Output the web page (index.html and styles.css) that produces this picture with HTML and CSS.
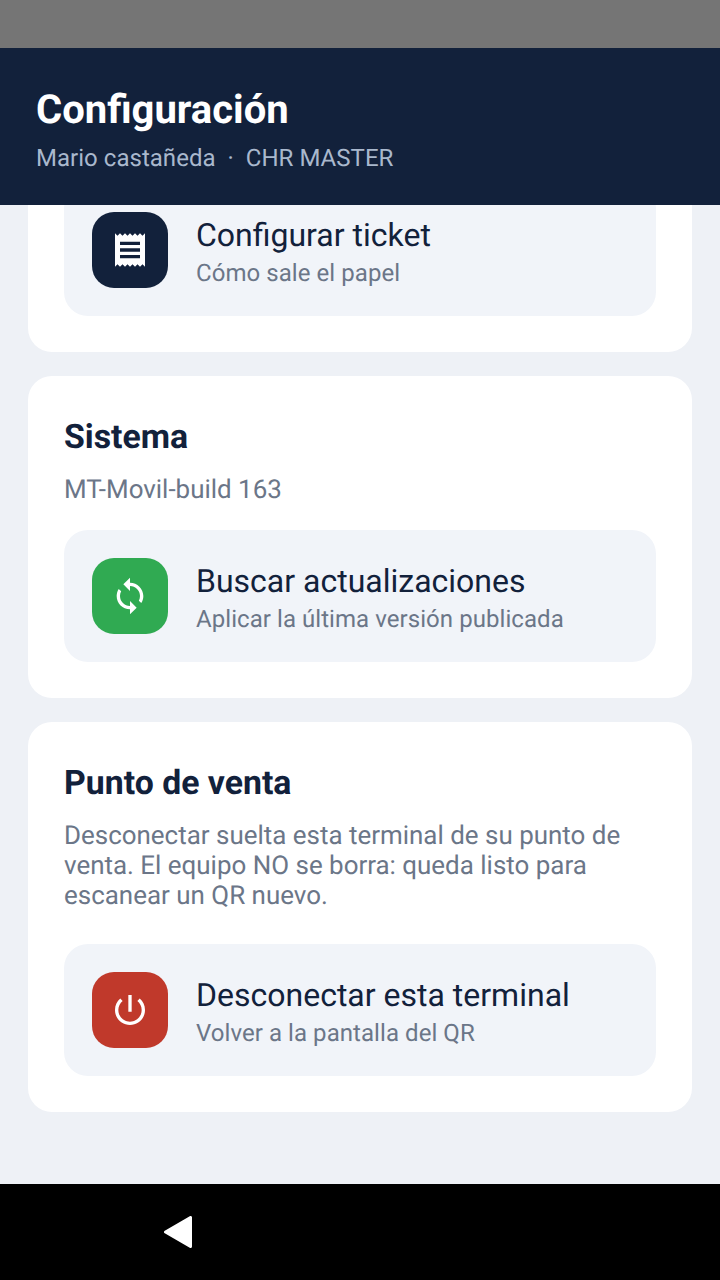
FILE: index.html
```html
<!DOCTYPE html>
<html lang="es">

<head>
  <meta charset="UTF-8" />
  <meta name="viewport" content="width=device-width, initial-scale=1.0" />
  <title>Configuración</title>

  <link rel="stylesheet" href="styles.css">
</head>

<body>
  <div class="status-bar"></div>

  <header class="header">
    <h1>Configuración</h1>
    <p>Mario castañeda &nbsp;·&nbsp; CHR MASTER</p>
  </header>

  <main class="scroll">
    <section class="card">
      <div class="row">
        <div class="icon icon-navy">
          <svg viewBox="0 0 24 24">
            <path d="M18 17H6v-2h12v2zm0-4H6v-2h12v2zm0-4H6V7h12v2zM3 22l1.5-1.5L6 22l1.5-1.5L9 22l1.5-1.5L12 22l1.5-1.5L15 22l1.5-1.5L18 22l1.5-1.5L21 22V2l-1.5 1.5L18 2l-1.5 1.5L15 2l-1.5 1.5L12 2l-1.5 1.5L9 2 7.5 3.5 6 2 4.5 3.5 3 2v20z" />
          </svg>
        </div>
        <div class="row-text">
          <div class="row-title">Configurar ticket</div>
          <div class="row-sub">Cómo sale el papel</div>
        </div>
      </div>
    </section>

    <section class="card">
      <h2>Sistema</h2>
      <p class="desc">MT-Movil-build 163</p>
      <div class="row">
        <div class="icon icon-green">
          <svg viewBox="0 0 24 24">
            <path d="M12 4V1L8 5l4 4V6c3.31 0 6 2.69 6 6 0 1.01-.25 1.97-.7 2.8l1.46 1.46C19.54 15.03 20 13.57 20 12c0-4.42-3.58-8-8-8zm0 14c-3.31 0-6-2.69-6-6 0-1.01.25-1.97.7-2.8L5.24 7.74C4.46 8.97 4 10.43 4 12c0 4.42 3.58 8 8 8v3l4-4-4-4v3z" />
          </svg>
        </div>
        <div class="row-text">
          <div class="row-title">Buscar actualizaciones</div>
          <div class="row-sub">Aplicar la última versión publicada</div>
        </div>
      </div>
    </section>

    <section class="card">
      <h2>Punto de venta</h2>
      <p class="desc desc-long">Desconectar suelta esta terminal de su punto de venta. El equipo NO se borra: queda listo para escanear un QR nuevo.</p>
      <div class="row">
        <div class="icon icon-red">
          <svg viewBox="0 0 24 24">
            <path d="M13 3h-2v10h2V3zm4.83 2.17l-1.42 1.42C17.99 7.86 19 9.81 19 12c0 3.87-3.13 7-7 7s-7-3.13-7-7c0-2.19 1.01-4.14 2.58-5.42L6.17 5.17C4.23 6.82 3 9.26 3 12c0 4.97 4.03 9 9 9s9-4.03 9-9c0-2.74-1.23-5.18-3.17-6.83z" />
          </svg>
        </div>
        <div class="row-text">
          <div class="row-title">Desconectar esta terminal</div>
          <div class="row-sub">Volver a la pantalla del QR</div>
        </div>
      </div>
    </section>
  </main>

  <nav class="nav-bar">
    <svg class="nav-back" viewBox="0 0 28 32">
      <path d="M26.5 1.5v29L1.5 16z" />
    </svg>
  </nav>
</body>

</html>
```

FILE: styles.css
```css
* {
  box-sizing: border-box;
}

body {
  margin: 0;
  width: 720px;
  height: 1280px;
  display: flex;
  flex-direction: column;
  overflow: hidden;
  background-color: #eef1f6;
  font-family: Roboto, "Noto Sans", sans-serif;
  text-rendering: geometricPrecision;
}

.status-bar {
  height: 48px;
  flex: none;
  background-color: #757575;
}

.header {
  height: 157px;
  flex: none;
  padding: 38px 36px 0;
  background-color: #12213b;
  position: relative;
  z-index: 1;
}

.header h1 {
  margin: 0;
  font-size: 40px;
  line-height: 48px;
  font-weight: 700;
  color: #fff;
}

.header p {
  margin: 10px 0 0;
  font-size: 24px;
  line-height: 28px;
  letter-spacing: 0.03px;
  color: #a9b8cd;
}

/* the list is scrolled to its end, so it hangs from the bottom */
.scroll {
  flex: 1;
  min-height: 0;
  display: flex;
  flex-direction: column;
  justify-content: flex-end;
  gap: 24px;
  padding: 0 28px 72px;
}

.card {
  flex: none;
  padding: 36px;
  border-radius: 24px;
  background-color: #fff;
}

.card h2 {
  margin: 0;
  font-size: 33.8px;
  line-height: 52px;
  font-weight: 700;
  color: #12213b;
}

.desc {
  margin: 11px 0 25px;
  font-size: 25.95px;
  line-height: 30px;
  color: #6b7688;
}

.desc-long {
  margin-bottom: 33px;
}

.row {
  display: flex;
  align-items: center;
  gap: 28px;
  padding: 28px;
  border-radius: 24px;
  background-color: #f1f4f9;
}

.icon {
  width: 76px;
  height: 76px;
  flex: none;
  display: flex;
  align-items: center;
  justify-content: center;
  border-radius: 22px;
}

.icon svg {
  width: 40px;
  height: 40px;
  fill: #fff;
}

.icon-navy {
  background-color: #12213b;
}

.icon-green {
  background-color: #30aa52;
}

.icon-red {
  background-color: #c0392b;
}

.row-text {
  padding-top: 2px;
}

.row-title {
  font-size: 32px;
  line-height: 40px;
  color: #12213b;
}

.row-sub {
  font-size: 24px;
  line-height: 28px;
  letter-spacing: 0.06px;
  margin-top: 4px;
  color: #6b7688;
}

.nav-bar {
  height: 96px;
  flex: none;
  display: flex;
  align-items: center;
  padding-left: 164px;
  background-color: #000;
}

.nav-back {
  width: 28px;
  height: 32px;
  fill: #fff;
  stroke: #fff;
  stroke-width: 3;
  stroke-linejoin: round;
}
```
